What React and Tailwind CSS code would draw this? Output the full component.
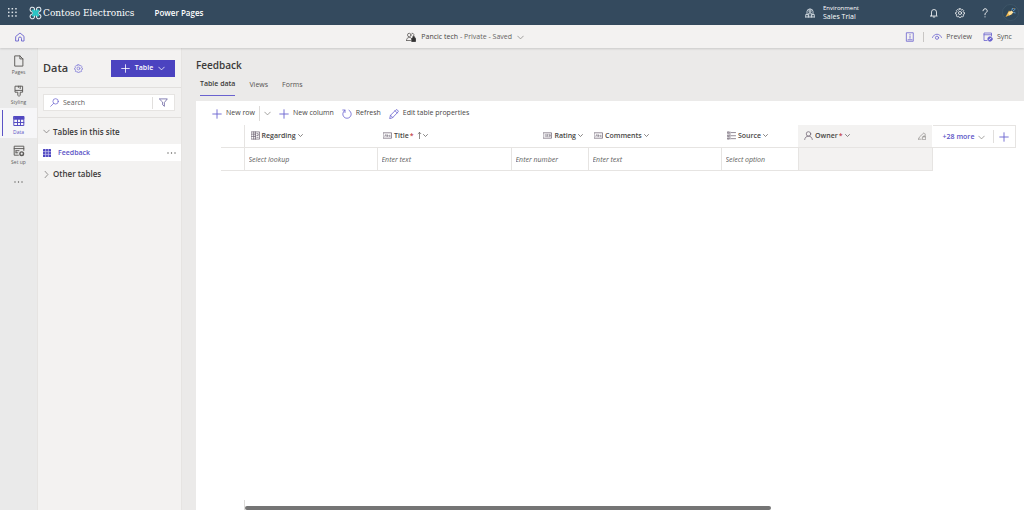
import React from "react";

function Icon({ children, size = "size-[10px]", className = "text-[#6a62cf]", box = "0 0 20 20", weight = 1.6 }) {
  return (
    <svg
      viewBox={box}
      className={`${size} ${className} shrink-0`}
      fill="none"
      stroke="currentColor"
      strokeWidth={weight}
      strokeLinecap="round"
      strokeLinejoin="round"
      aria-hidden="true"
    >
      {children}
    </svg>
  );
}

const Plus = ({ className, size = "size-[10px]" }) => (
  <Icon size={size} className={className} weight={1.8}><path d="M10 1.500v17M1.500 10h17" /></Icon>
);
const ChevronDown = ({ className = "text-[#8a8886]", size = "size-[7px]", weight = 2.2 }) => (
  <Icon size={size} className={className} weight={weight}><path d="M2 6l8 8 8-8" /></Icon>
);
const ChevronRight = () => (
  <Icon size="size-[7px]" className="text-[#7a7876]" weight={2.2}><path d="M6 1l8 9-8 9" /></Icon>
);

const gearPath =
  "M8.4 1.5h3.2l.5 2.4 1.7.8 2.2-1.3 2.2 2.3-1.3 2.1.7 1.6 2.3.6v3.1l-2.4.5-.7 1.7 1.3 2.1-2.2 2.2-2.1-1.3-1.7.7-.5 2.4H8.4l-.5-2.4-1.7-.7-2.1 1.3-2.2-2.2 1.3-2.1-.7-1.7-2.2-.5V10l2.2-.6.8-1.6L2 5.7l2.2-2.3 2.1 1.3 1.6-.8z";

const Gear = ({ size, className }) => (
  <Icon size={size} className={className} box="-1 0 22 22" weight={1.7}>
    <path d={gearPath} />
    <circle cx="10" cy="11" r="3.4" />
  </Icon>
);

function Logo() {
  return (
    <svg viewBox="0 0 24 26" className="h-[14px] w-[13px] shrink-0" fill="none" aria-hidden="true">
      <g stroke="#e6edf2" strokeWidth="2">
        <path d="M9.500 9a4.200 4.200 0 1 0-4.500 1.500L8 12" />
        <path d="M14.500 9a4.200 4.200 0 1 1 4.500 1.500L16 12" />
        <path d="M9.500 17a4.200 4.200 0 1 1-4.500-1.500L8 14" />
        <path d="M14.500 17a4.200 4.200 0 1 0 4.500-1.500L16 14" />
      </g>
      <path d="M6 7l12 12M18 7L6 19" stroke="#2cc5c5" strokeWidth="4.500" />
      <path d="M12 7.500l5.500 5.500-5.500 5.500L6.500 13z" fill="#2cc5c5" />
    </svg>
  );
}

function TopBar() {
  return (
    <header className="flex h-[25px] shrink-0 items-center bg-[#344a5e] pr-[5px] pl-[8px] text-white">
      <button aria-label="App launcher" className="flex">
        <svg viewBox="0 0 9 9" className="size-[9px]" fill="#dfe5ea" aria-hidden="true">
          {[0, 3.6, 7.2].map((y) => [0, 3.6, 7.2].map((x) => <rect key={`${x}-${y}`} x={x} y={y} width="1.500" height="1.500" />))}
        </svg>
      </button>
      <a href="#home" className="ml-[12px] flex items-center gap-px font-['DejaVu_Serif_Condensed','DejaVu_Serif',serif] text-[10px] leading-[14px] whitespace-nowrap">
        <Logo />
        <span>Contoso Electronics</span>
      </a>
      <a href="#power-pages" className="ml-[20px] pt-px text-[8px] font-semibold whitespace-nowrap">Power Pages</a>
      <button className="ml-auto flex items-center gap-[8px] text-left">
        <Icon size="size-[10px]" className="text-[#d5dde3]" weight={1.8}>
          <path d="M4 12V7a6 5 0 0 1 12 0v5M1.500 18v-5h5v5M7.500 18v-8h5v8M13.500 18v-5h5v5M1 18h18M7 6h6M10 2v8" />
        </Icon>
        <span className="flex w-[103px] flex-col">
          <span className="text-[6px] leading-[8px]">Environment</span>
          <span className="text-[7px] leading-[9px]">Sales Trial</span>
        </span>
      </button>
      <button aria-label="Notifications" className="ml-[3px] flex">
        <Icon size="size-[10px]" className="text-white">
          <path d="M5 15V8a5 5 0 0 1 10 0v7l1.500 1h-13zM8.500 18h3" />
        </Icon>
      </button>
      <button aria-label="Settings" className="ml-[16px] flex"><Gear size="size-[10px]" className="text-white" /></button>
      <button aria-label="Help" className="ml-[15px] flex">
        <Icon size="size-[10px]" className="text-white" weight={1.8}>
          <path d="M6 5.500a4.200 4.200 0 1 1 6.500 3.600C10.600 10.300 10 11 10 13.500M10 17.500v.4" />
        </Icon>
      </button>
      <button aria-label="Account" className="ml-[12px] flex">
        <svg viewBox="0 0 34 34" className="size-[17px]" aria-hidden="true">
          <circle cx="17" cy="17" r="16" fill="#30475a" stroke="#486073" />
          <path d="M7 26l7-13 7 7z" fill="#f2b84b" />
          <path d="M12 18l7-5 4 4-8 6z" fill="#ffe2a0" />
          <path d="M20 12l1-4M22 14l5-4M23 17l4 1" stroke="#5b9bd0" strokeWidth="2" />
          <circle cx="24" cy="9" r="1.200" fill="#e6a95a" />
        </svg>
      </button>
    </header>
  );
}

function SiteBar() {
  return (
    <div className="relative z-10 flex h-[23px] shrink-0 items-center justify-between bg-[#f3f2f1] pt-px pr-[12px] pl-[15px] text-[7px] text-[#555351] shadow-[0_1px_2px_rgba(0,0,0,0.14)]">
      <a href="#home" aria-label="Home" className="flex">
        <Icon size="size-[10px]" weight={1.8}>
          <path d="M2 8.500L10 2l8 6.500V18h-5v-5a3 3 0 0 0-6 0v5H2z" />
        </Icon>
      </a>
      <button className="flex items-center whitespace-nowrap">
        <Icon size="size-[10px]" className="text-[#5d5b59]">
          <circle cx="6.500" cy="6" r="3.500" />
          <path d="M1 17c0-4 2-6 5.500-6s4 1 5 2.500M1 17h8M12 2.500a3.500 3.500 0 0 1 1.500 6.800" />
          <path d="M12 13h7v6h-7zM13.500 13v-2a2 2 0 0 1 4 0v2" fill="#333" stroke="#333" />
        </Icon>
        <span className="ml-[5px] text-[#666462]">
          <span className="text-[#484644]">Pancic tech</span> - Private - Saved
        </span>
        <span className="ml-[5px] flex"><ChevronDown /></span>
      </button>
      <div className="flex items-center">
        <button aria-label="Mobile preview" className="flex">
          <Icon size="size-[10px]"><path d="M3.500 1.500h13v17h-13zM6 15.500h8M10 5v1M10 8.500v4" /></Icon>
        </button>
        <span className="mx-[8px] h-[10px] w-px bg-[#c8c6c4]" />
        <button className="flex items-center gap-[4px]">
          <Icon size="size-[10px]"><path d="M1 11c2-4.500 5-6.500 9-6.500s7 2 9 6.500" /><circle cx="10" cy="11.500" r="3.200" /></Icon>
          Preview
        </button>
        <button className="ml-[11px] flex items-center gap-[4px]">
          <Icon size="size-[10px]">
            <path d="M8 17H2V2h15v6M2 5.500h15" />
            <circle cx="14" cy="14" r="4.500" fill="currentColor" />
            <path d="M12 15.500l4-3" stroke="#fff" />
          </Icon>
          Sync
        </button>
      </div>
    </div>
  );
}

const railItems = [
  {
    label: "Pages",
    icon: <path d="M3.500 1.500h8l5 5v12h-13zM11.500 1.500v5h5" />,
  },
  {
    label: "Styling",
    icon: <path d="M4 2h12v10h-4v5l-2 2-2-2v-5H4zM4 9h12M12 2v4M9 2v2" />,
  },
  {
    label: "Data",
    active: true,
    icon: (
      <>
        <path d="M2 2.500h16v15H2zM2 12.500h16M7.500 7.500v10M12.500 7.500v10" />
        <path d="M2 2.500h16v4.500H2z" fill="currentColor" />
      </>
    ),
  },
  {
    label: "Set up",
    icon: (
      <>
        <path d="M9 17H2V2h16v7M2 6h16M5 9.500h5M5 13h3M5 9.500V13" />
        <circle cx="14.500" cy="14.500" r="3" strokeWidth="2.400" />
      </>
    ),
  },
];

function Rail() {
  return (
    <nav className="flex w-[37px] shrink-0 flex-col bg-[#eaeaea]" aria-label="Workspaces">
      {railItems.map(({ label, icon, active }) => (
        <button
          key={label}
          className={`flex h-[30px] w-full items-center ${
            active ? "bg-[#f6f6f8] text-[#5b53c6]" : "text-[#605e5c]"
          }`}
        >
          <span className={`ml-[2px] h-[26px] w-px ${active ? "bg-[#5b53c6]" : ""}`} />
          <span className="flex flex-1 flex-col items-center gap-[2px] pt-[3px] pr-[3px] text-[5px] leading-[6px]">
            <Icon size="size-[12px]" className={active ? "text-[#5148c0]" : "text-[#5d5b59]"}>{icon}</Icon>
            {label}
          </span>
        </button>
      ))}
      <button aria-label="More" className="flex h-[28px] items-center justify-center"><Dots /></button>
    </nav>
  );
}

const Dots = () => (
  <svg viewBox="0 0 18 4" className="h-[2px] w-[9px]" fill="#5d5b59" aria-hidden="true">
    <circle cx="2" cy="2" r="1.400" /><circle cx="9" cy="2" r="1.400" /><circle cx="16" cy="2" r="1.400" />
  </svg>
);

function DataPanel() {
  return (
    <aside className="flex w-[145px] shrink-0 flex-col border-x border-[#e6e4e2] bg-[#f3f2f1] text-[#3b3a39]">
      <div className="flex h-[40px] items-center border-b border-[#e1dfdd] pt-[2px] pr-[6px] pl-[5px]">
        <h2 className="text-[11px] font-semibold">Data</h2>
        <button aria-label="Data settings" className="ml-[6px] flex"><Gear size="size-[9px]" className="text-[#7b74d6]" /></button>
        <button className="ml-auto flex h-[17px] w-[64px] items-center justify-center gap-[5px] bg-[#4b43c0] text-[7px] font-semibold text-white">
          <Plus className="text-white" size="size-[9px]" />
          Table
          <ChevronDown className="text-white" />
        </button>
      </div>
      <div className="flex h-[30px] items-center border-b border-[#e1dfdd] pr-[6px] pl-[5px]">
        <div className="flex h-[17px] w-full items-center border border-[#e6e4e2] bg-white pl-[6px]">
          <Icon size="size-[9px]"><circle cx="12.500" cy="7.500" r="6" /><path d="M8 12l-6.500 6.500" /></Icon>
          <input type="search" aria-label="Search tables" placeholder="Search" className="ml-[4px] min-w-0 flex-1 bg-transparent pt-px text-[7px] outline-none placeholder:text-[#605e5c]" />
          <button aria-label="Filter" className="flex h-[12px] w-[22px] items-center justify-center border-l border-[#e1dfdd]">
            <Icon size="size-[9px]" className="text-[#5a5498]"><path d="M1.500 2h17L12 10v8.500L8 15v-5z" /></Icon>
          </button>
        </div>
      </div>
      <button className="flex h-[26px] items-center gap-[3px] pt-px pl-[5px] text-[8px] font-semibold">
        <ChevronDown className="text-[#7a7876]" />
        Tables in this site
      </button>
      <div className="flex h-[17px] items-center bg-white pr-[5px] pl-[5px]">
        <a href="#feedback" className="flex flex-1 items-center gap-[7px] pt-px text-[7px] font-semibold text-[#5b53c6]">
          <svg viewBox="0 0 16 16" className="size-[8px]" aria-hidden="true">
            <rect width="16" height="16" rx="1" fill="#4b43c0" />
            <path d="M5.300 0v16M10.700 0v16M0 5.300h16M0 10.700h16" stroke="#c9c6ee" strokeWidth="1.500" />
          </svg>
          Feedback
        </a>
        <button aria-label="Feedback options" className="flex"><Dots /></button>
      </div>
      <button className="flex h-[25px] items-center gap-[3px] pt-px pl-[5px] text-[8px] font-semibold">
        <ChevronRight />
        Other tables
      </button>
    </aside>
  );
}

function Tabs() {
  return (
    <div role="tablist" className="flex gap-[14px] text-[7px] leading-[10px] text-[#555351]">
      {["Table data", "Views", "Forms"].map((tab, i) => (
        <button
          key={tab}
          role="tab"
          aria-selected={i === 0}
          className={`h-[17px] pb-[6px] whitespace-nowrap ${
            i === 0 ? "border-b border-[#6a62cf] font-semibold text-[#3b3a39]" : ""
          }`}
        >
          {tab}
        </button>
      ))}
    </div>
  );
}

function Toolbar() {
  return (
    <div className="flex h-[24px] items-center gap-[8px] pt-px pl-[16px] text-[7px] whitespace-nowrap text-[#484644]">
      <div className="flex items-center">
        <button className="flex items-center gap-[4px]"><Plus />New row</button>
        <span className="mx-[4px] h-[15px] w-px bg-[#dddbd9]" />
        <button aria-label="New row options" className="flex"><ChevronDown /></button>
      </div>
      <button className="flex items-center gap-[4px]"><Plus />New column</button>
      <button className="flex items-center gap-[4px]">
        <Icon><path d="M6 2.500a8.500 8.500 0 1 0 8 0M6 7V2H1.500" /></Icon>Refresh
      </button>
      <button className="flex items-center gap-[4px]">
        <Icon><path d="M1.500 18.500l1.500-6L14 1.500c2-1 5 2 4.500 4L7.500 17zM3 12.500L7.500 17M12 3.500L16.500 8" /></Icon>
        Edit table properties
      </button>
    </div>
  );
}

const lookupIcon = <path d="M1 2h18v16H1zM1 7h9M1 12h9M6 2v16M10 2v16M13 6h3v4h-3M13 14h3" />;
const textIcon = <><path d="M1 4h18v12H1z" /><path d="M4 12l1.500-4L7 12M9 8v4h2V9.500H9M16 9.500h-2.500V12H16" strokeWidth="1.200" /></>;
const numberIcon = <><path d="M1 4h18v12H1z" /><path d="M5 7.500v5M8 7.500h3v2.500H8v2.500h3M13.500 7.500H16v5h-2.500M14 10h2" strokeWidth="1.200" /></>;
const choiceIcon = <path d="M1.500 2h3v3h-3zM1.500 9h3v3h-3zM1.500 15.500h3v2.500h-3zM9 3.500h10M9 10.500h10M9 17h10M6.500 2v16" />;
const personIcon = <><circle cx="10" cy="6.500" r="5" /><path d="M1.500 19c.5-5 4-7.500 8.500-7.500s8 2.500 8.500 7.500" /></>;

const columns = [
  { label: "Regarding", icon: lookupIcon, hint: "Select lookup", width: "w-[133px]" },
  { label: "Title", icon: textIcon, hint: "Enter text", width: "w-[134px]", required: true, sorted: true },
  { label: "Rating", icon: numberIcon, hint: "Enter number", width: "w-[77px]", end: true },
  { label: "Comments", icon: textIcon, hint: "Enter text", width: "w-[133px]" },
  { label: "Source", icon: choiceIcon, hint: "Select option", width: "w-[77px]" },
  { label: "Owner", icon: personIcon, width: "w-[134px]", required: true, locked: true },
];

function HeaderCell({ column }) {
  const { label, icon, required, sorted, end, locked } = column;
  return (
    <div className={`flex items-center ${end ? "justify-end pr-[5px]" : "pl-[6px]"}`}>
      <button className="flex items-center text-[7px] font-semibold text-[#484644]">
        <Icon size="size-[9px]" className="text-[#6b6070]">{icon}</Icon>
        <span className="ml-[2px] pt-px">{label}</span>
        {required && <span className="ml-px text-[#c4474b]">*</span>}
        {sorted && (
          <span className="ml-[2px] flex">
            <Icon size="size-[7px]" className="text-[#605e5c]" weight={2}><path d="M10 19V1M6 5l4-4 4 4" /></Icon>
          </span>
        )}
        <span className={`flex ${sorted ? "" : "ml-[2px]"}`}><ChevronDown size="size-[5px]" className="text-[#605e5c]" weight={3} /></span>
      </button>
      {locked && (
        <span className="mr-[6px] ml-auto flex">
          <Icon size="size-[8px]" className="text-[#8a8886]">
            <path d="M1 18l3-6L15 2l3 3v5M1 18h7M12 12h7v7h-7zM13.500 12v-2h4v2" />
          </Icon>
        </span>
      )}
    </div>
  );
}

function Grid() {
  return (
    <div className="flex items-start pl-[25px]">
      <table className="shrink-0 table-fixed border-collapse text-left">
        <thead>
          <tr className="h-[22px]">
            <th className="w-[23px] border-r border-b border-[#e6e4e2] p-0" aria-label="Row selection" />
            {columns.map((c) => (
              <th key={c.label} scope="col" className={`${c.width} border-b border-[#e6e4e2] p-0 ${c.locked ? "bg-[#f3f2f1]" : ""}`}>
                <HeaderCell column={c} />
              </th>
            ))}
          </tr>
        </thead>
        <tbody>
          <tr className="h-[23px]">
            <td className="border-r border-b border-[#e6e4e2] p-0" />
            {columns.map((c) => (
              <td key={c.label} className={`border-r border-b border-[#e6e4e2] p-0 ${c.locked ? "bg-[#f3f2f1]" : ""}`}>
                {c.hint && (
                  <input
                    type="text"
                    aria-label={c.label}
                    placeholder={c.hint}
                    className="block h-[22px] w-full bg-transparent pt-px pl-[4px] text-[7px] italic outline-none placeholder:text-[#605e5c]"
                  />
                )}
              </td>
            ))}
          </tr>
        </tbody>
      </table>
      <div className="flex h-[23px] w-[83px] shrink-0 items-center border border-l-0 border-[#e6e4e2] text-[#5b53c6]">
        <button className="flex flex-1 items-center justify-center gap-[4px] pt-px pl-[3px] text-[7px] font-semibold whitespace-nowrap">
          +28 more <ChevronDown />
        </button>
        <button aria-label="Add column" className="flex h-[13px] w-[22px] items-center justify-center border-l border-[#e1dfdd]">
          <Plus />
        </button>
      </div>
    </div>
  );
}

export default function App() {
  return (
    <div className="flex h-screen flex-col overflow-hidden bg-[#ebeae9] font-['Open_Sans','Noto_Sans',sans-serif]">
      <TopBar />
      <SiteBar />
      <div className="flex min-h-0 flex-1">
        <Rail />
        <DataPanel />
        <main className="flex min-w-0 flex-1 flex-col pl-[14px]">
          <h1 className="pt-[10px] text-[10px] leading-[15px] font-semibold text-[#3b3a39]">Feedback</h1>
          <div className="mt-[6px] pl-[4px]"><Tabs /></div>
          <section className="mt-[5px] flex flex-1 flex-col bg-white" aria-label="Table data">
            <Toolbar />
            <Grid />
            <div className="mt-auto mr-[253px] ml-[48px] border-l border-[#dddbd9] pt-[6px]">
              <div className="h-[4px] rounded-full bg-[#757575]" />
            </div>
          </section>
        </main>
      </div>
    </div>
  );
}
